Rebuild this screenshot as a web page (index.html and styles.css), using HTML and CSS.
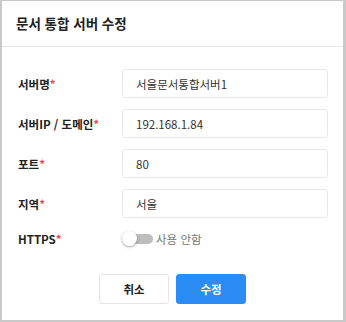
FILE: index.html
```html
<!DOCTYPE html>
<html lang="ko">
<head>
  <meta charset="UTF-8" />
  <meta name="viewport" content="width=device-width, initial-scale=1.0" />
  <title>문서 통합 서버 수정</title>
  <link rel="stylesheet" href="styles.css">
</head>
<body>
  <div class="dialog">
    <div class="dialog-header">문서 통합 서버 수정</div>

    <div class="dialog-body">
      <div class="form-row">
        <label>서버명<span class="req">*</span></label>
        <input type="text" value="서울문서통합서버1" />
      </div>
      <div class="form-row">
        <label>서버IP / 도메인<span class="req">*</span></label>
        <input type="text" value="192.168.1.84" />
      </div>
      <div class="form-row">
        <label>포트<span class="req">*</span></label>
        <input type="text" value="80" />
      </div>
      <div class="form-row">
        <label>지역<span class="req">*</span></label>
        <input type="text" value="서울" />
      </div>
      <div class="form-row switch-row">
        <label>HTTPS<span class="req">*</span></label>
        <div class="switch">
          <span class="track"><span class="knob"></span></span>
          <span class="switch-text">사용 안함</span>
        </div>
      </div>
    </div>

    <div class="dialog-footer">
      <button class="btn">취소</button>
      <button class="btn primary">수정</button>
    </div>
  </div>
</body>
</html>
```

FILE: styles.css
```css
body { margin: 0; padding: 1px 3px 2px 2px; background: #c8c8c8; font-family: "Noto Sans CJK KR", "Noto Sans", sans-serif; }
.dialog { background: #fff; height: 319px; box-sizing: border-box; }
.dialog-header { height: 45px; line-height: 45px; padding-left: 14px; font-size: 13.5px; font-weight: bold; color: #222; border-bottom: 1px solid #e6e6e6; }
.dialog-body { padding: 22px 15px 0 16px; display: flex; flex-direction: column; gap: 11px; }
.form-row { display: flex; align-items: center; height: 29px; }
.form-row label { width: 104px; font-size: 11.5px; font-weight: bold; color: #222; }
.req { color: #f04848; }
.form-row input { flex: 1; height: 29px; box-sizing: border-box; border: 1px solid #e8e8e8; border-radius: 3px; padding: 0 13px; font-family: inherit; font-size: 11.5px; color: #333; outline: none; }
.switch-row { height: 20px; }
.switch { display: flex; align-items: center; }
.track { position: relative; width: 25px; height: 10px; margin-left: 6px; border-radius: 5px; background: #bdbdbd; }
.knob { position: absolute; left: -6px; top: -3px; width: 15px; height: 15px; border-radius: 50%; background: #fff; box-shadow: 0 1px 3px rgba(0,0,0,0.35); }
.switch-text { margin-left: 3px; font-size: 11.5px; color: #777; }
.dialog-footer { display: flex; justify-content: center; gap: 7px; margin-top: 25px; }
.btn { width: 70px; height: 30px; border: 1px solid #e4e4e4; border-radius: 3px; background: #fff; font-family: inherit; font-size: 11.5px; font-weight: bold; color: #222; }
.btn.primary { background: #2a8cf4; border-color: #2a8cf4; color: #fff; }
```
